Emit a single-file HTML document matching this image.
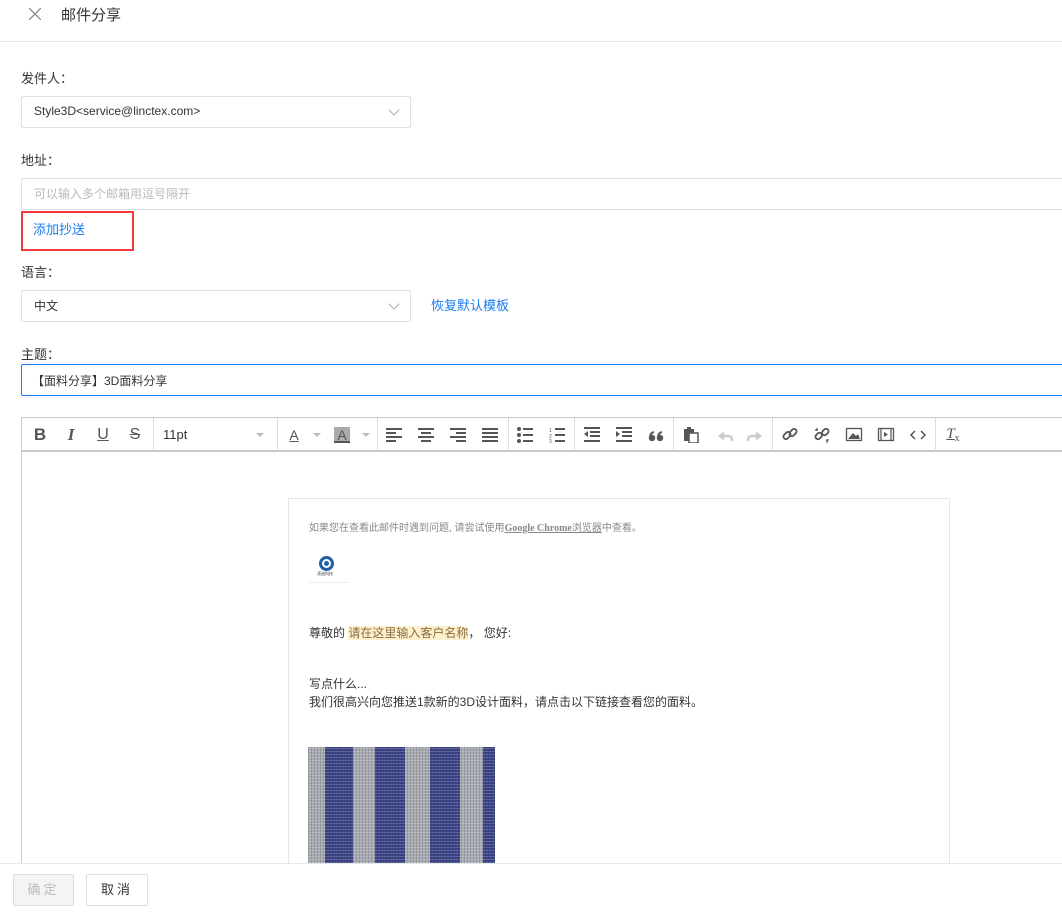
<!DOCTYPE html>
<html><head><meta charset="utf-8"><style>
*{box-sizing:border-box;margin:0;padding:0}
body{width:1062px;height:913px;overflow:hidden;background:#fff;font-family:"Liberation Sans","Noto Sans CJK SC",sans-serif;color:#333;position:relative;font-size:13px}
.a{position:absolute}
.lbl{position:absolute;left:21px;font-size:13px;color:#333}
.box{position:absolute;border:1px solid #dcdfe6;border-radius:2px;background:#fff}
.chev{position:absolute;width:8px;height:8px;border-right:1px solid #aaa;border-bottom:1px solid #aaa;transform:rotate(45deg)}
.tb{position:absolute;top:417px;left:21px;width:1050px;height:35px;border-top:1px solid #ccc;border-bottom:2px solid #c8c8c8;border-left:1px solid #ccc}
.sep{position:absolute;top:0;width:1px;height:33px;background:#ddd}
.ic{position:absolute;top:0;height:33px;display:flex;align-items:center;justify-content:center;width:26px;color:#555}
.tri{position:absolute;top:15px;width:0;height:0;border-left:4px solid transparent;border-right:4px solid transparent;border-top:4px solid #bbb}
</style></head><body>
<svg class="a" style="left:29px;top:8px" width="12" height="12" stroke="#888" stroke-width="1.3"><path d="M0 0L12 12M12 0L0 12"/></svg>
<div class="a" style="left:61px;top:4px;font-size:15px;color:#333">邮件分享</div>
<div class="a" style="left:0;top:41px;width:1062px;height:1px;background:#e8e8e8"></div>

<div class="lbl" style="top:68px">发件人：</div>
<div class="box" style="left:21px;top:96px;width:390px;height:32px"><span class="a" style="left:12px;top:7px;font-size:12px;color:#333">Style3D&lt;service@linctex.com&gt;</span><div class="chev" style="left:368px;top:9px"></div></div>

<div class="lbl" style="top:150px">地址：</div>
<div class="box" style="left:21px;top:178px;width:1050px;height:32px"><span class="a" style="left:12px;top:6px;font-size:12px;color:#bbb">可以输入多个邮箱用逗号隔开</span></div>
<div class="a" style="left:21px;top:211px;width:113px;height:40px;border:2px solid #f23a3c"></div>
<div class="a" style="left:33px;top:219px;font-size:13px;color:#1a7cf0">添加抄送</div>

<div class="lbl" style="top:262px">语言：</div>
<div class="box" style="left:21px;top:290px;width:390px;height:32px"><span class="a" style="left:12px;top:6px;font-size:12px">中文</span><div class="chev" style="left:368px;top:9px"></div></div>
<div class="a" style="left:431px;top:295px;font-size:13px;color:#1a7cf0">恢复默认模板</div>

<div class="lbl" style="top:344px">主题：</div>
<div class="box" style="left:21px;top:364px;width:1050px;height:32px;border-color:#1a7cf0"><span class="a" style="left:10px;top:7px;font-size:12px">【面料分享】3D面料分享</span></div>

<div class="tb">
 <div class="ic" style="left:5px;font-weight:bold;font-size:17px">B</div>
 <div class="ic" style="left:36px;font-style:italic;font-size:17px;font-family:'Liberation Serif',serif;font-weight:bold">I</div>
 <div class="ic" style="left:68px;text-decoration:underline;font-size:16px">U</div>
 <div class="ic" style="left:100px;text-decoration:line-through;font-size:16px">S</div>
 <div class="sep" style="left:131px"></div>
 <div class="a" style="left:141px;top:9px;font-size:13px;color:#333">11pt</div>
 <div class="tri" style="left:234px"></div>
 <div class="sep" style="left:255px"></div>
 <div class="ic" style="left:259px;font-size:14px;text-decoration:underline">A</div>
 <div class="tri" style="left:291px"></div>
 <div class="ic" style="left:307px"><span style="background:#aaa;width:16px;height:16px;display:inline-block;text-align:center;font-size:14px;line-height:16px;border-bottom:2px solid #555">A</span></div>
 <div class="tri" style="left:340px"></div>
 <div class="sep" style="left:355px"></div>
 <svg class="a" style="left:364px;top:9px" width="130" height="16" fill="#555">
  <g><rect x="0" y="1" width="16" height="2"/><rect x="0" y="5" width="10" height="2"/><rect x="0" y="9" width="16" height="2"/><rect x="0" y="13" width="10" height="2"/></g>
  <g transform="translate(32 0)"><rect x="0" y="1" width="16" height="2"/><rect x="3" y="5" width="10" height="2"/><rect x="0" y="9" width="16" height="2"/><rect x="3" y="13" width="10" height="2"/></g>
  <g transform="translate(64 0)"><rect x="0" y="1" width="16" height="2"/><rect x="6" y="5" width="10" height="2"/><rect x="0" y="9" width="16" height="2"/><rect x="6" y="13" width="10" height="2"/></g>
  <g transform="translate(96 0)"><rect x="0" y="1" width="16" height="2"/><rect x="0" y="5" width="16" height="2"/><rect x="0" y="9" width="16" height="2"/><rect x="0" y="13" width="16" height="2"/></g>
 </svg>
 <div class="sep" style="left:486px"></div>
 <svg class="a" style="left:495px;top:9px" width="50" height="16" fill="#555">
  <circle cx="2" cy="2" r="2"/><circle cx="2" cy="8" r="2"/><circle cx="2" cy="14" r="2"/><rect x="6" y="1" width="10" height="2"/><rect x="6" y="7" width="10" height="2"/><rect x="6" y="13" width="10" height="2"/>
  <g transform="translate(32 0)"><text x="0" y="5" font-size="5">1</text><text x="0" y="11" font-size="5">2</text><text x="0" y="16" font-size="5">3</text><rect x="6" y="1" width="10" height="2"/><rect x="6" y="7" width="10" height="2"/><rect x="6" y="13" width="10" height="2"/></g>
 </svg>
 <div class="sep" style="left:552px"></div>
 <svg class="a" style="left:562px;top:9px" width="90" height="16" fill="#555">
  <rect x="0" y="0" width="16" height="2"/><rect x="6" y="4" width="10" height="2"/><rect x="6" y="8" width="10" height="2"/><rect x="0" y="13" width="16" height="2"/><path d="M4 4 L0 7 L4 10Z"/>
  <g transform="translate(32 0)"><rect x="0" y="0" width="16" height="2"/><rect x="6" y="4" width="10" height="2"/><rect x="6" y="8" width="10" height="2"/><rect x="0" y="13" width="16" height="2"/><path d="M0 4 L4 7 L0 10Z"/></g>
  <circle cx="68" cy="11" r="3.2"/><path d="M65 11 Q65 5 70 4 L70 6 Q67 7 67 10Z"/>
  <circle cx="76" cy="11" r="3.2"/><path d="M73 11 Q73 5 78 4 L78 6 Q75 7 75 10Z"/>
 </svg>
 <div class="sep" style="left:651px"></div>
 <svg class="a" style="left:662px;top:9px" width="80" height="16">
  <rect x="0" y="2" width="10" height="12" fill="#555"/><rect x="3" y="0" width="4" height="3" fill="#555"/><rect x="5" y="6" width="9" height="10" fill="#fff" stroke="#555" stroke-width="1.5"/>
  <path d="M40 6 L36 9 L40 12 M36 9 H44 Q48 9 48 14" stroke="#ccc" stroke-width="2.5" fill="none"/>
  <path d="M72 6 L76 9 L72 12 M76 9 H68 Q64 9 64 14" stroke="#ccc" stroke-width="2.5" fill="none"/>
 </svg>
 <div class="sep" style="left:750px"></div>
 <svg class="a" style="left:760px;top:8px" width="150" height="18" fill="none" stroke="#555" stroke-width="1.8">
  <rect x="1" y="7" width="8" height="5" rx="2.5" transform="rotate(-45 5 9.5)"/><rect x="7" y="4" width="8" height="5" rx="2.5" transform="rotate(-45 11 6.5)"/>
  <g transform="translate(32 0)"><rect x="1" y="8" width="7" height="5" rx="2.5" transform="rotate(-45 4 10)"/><rect x="8" y="3" width="7" height="5" rx="2.5" transform="rotate(-45 12 6)"/><path d="M3 2v3M1 4h3M13 14v3M12 14h3" stroke-width="1.2"/></g>
  <g transform="translate(64 0)"><rect x="0.5" y="2.5" width="15" height="12" stroke-width="1.3"/><path d="M2 13 L7 7 L10 10 L12 8 L14 13Z" fill="#555" stroke="none"/></g>
  <g transform="translate(96 0)"><rect x="0.5" y="2.5" width="15" height="12" stroke-width="1.3"/><path d="M3 3v11M13 3v11" stroke-width="1.2"/><path d="M6 6 L10 8.5 L6 11Z" fill="#555" stroke="none"/></g>
  <path d="M133 5 L129 9 L133 13 M139 5 L143 9 L139 13" stroke-width="1.5"/>
 </svg>
 <div class="sep" style="left:913px"></div>
 <div class="ic" style="left:918px;font-style:italic;font-size:15px;font-family:'Liberation Serif',serif"><span style="text-decoration:underline">T</span><span style="font-size:10px;font-style:normal;margin-top:8px">x</span></div>
</div>

<div class="a" style="left:21px;top:452px;width:1px;height:411px;background:#ccc"></div>
<div class="a" style="left:288px;top:498px;width:662px;height:380px;border:1px solid #e6e6e6"></div>
<div class="a" style="left:309px;top:519px;font-size:10px;color:#888">如果您在查看此邮件时遇到问题, 请尝试使用<span style="text-decoration:underline;font-family:'Liberation Serif',serif;font-weight:bold">Google Chrome</span><u>浏览器</u>中查看。</div>
<div class="a" style="left:319px;top:556px;width:15px;height:15px;border-radius:50%;background:#1f5fa8"></div>
<div class="a" style="left:322px;top:559px;width:9px;height:9px;border-radius:50%;border:2px solid #fff"></div>
<div class="a" style="left:317px;top:571px;font-size:4px;color:#333">凌迪科技</div>
<div class="a" style="left:309px;top:582px;width:40px;height:1px;background:#eee"></div>
<div class="a" style="left:309px;top:624px;font-size:12px;color:#333">尊敬的 <span style="background:#fdf0cf;color:#8a6d3b">请在这里输入客户名称</span>， 您好:</div>
<div class="a" style="left:309px;top:675px;font-size:12px;color:#333;line-height:18px">写点什么...<br>我们很高兴向您推送1款新的3D设计面料，请点击以下链接查看您的面料。</div>
<div class="a" style="left:308px;top:747px;width:187px;height:116px;background:linear-gradient(90deg,#a8abb3 0 17px,#3c4488 17px 45px,#a8abb3 45px 67px,#3c4488 67px 97px,#a8abb3 97px 122px,#3c4488 122px 152px,#a8abb3 152px 175px,#3c4488 175px);"></div>
<div class="a" style="left:308px;top:747px;width:187px;height:116px;background:repeating-linear-gradient(0deg,rgba(255,255,255,.18) 0 1px,transparent 1px 3px),repeating-linear-gradient(90deg,rgba(0,0,0,.15) 0 1px,transparent 1px 3px)"></div>

<div class="a" style="left:0;top:863px;width:1062px;height:50px;background:#fff;border-top:1px solid #e8e8e8"></div>
<div class="a" style="left:13px;top:874px;width:61px;height:32px;border:1px solid #ddd;background:#f4f4f4;border-radius:2px;color:#bbb;font-size:13px;text-align:center;line-height:30px;letter-spacing:3px">确定</div>
<div class="a" style="left:86px;top:874px;width:62px;height:32px;border:1px solid #ddd;background:#fff;border-radius:2px;color:#333;font-size:13px;text-align:center;line-height:30px;letter-spacing:3px">取消</div>
</body></html>
